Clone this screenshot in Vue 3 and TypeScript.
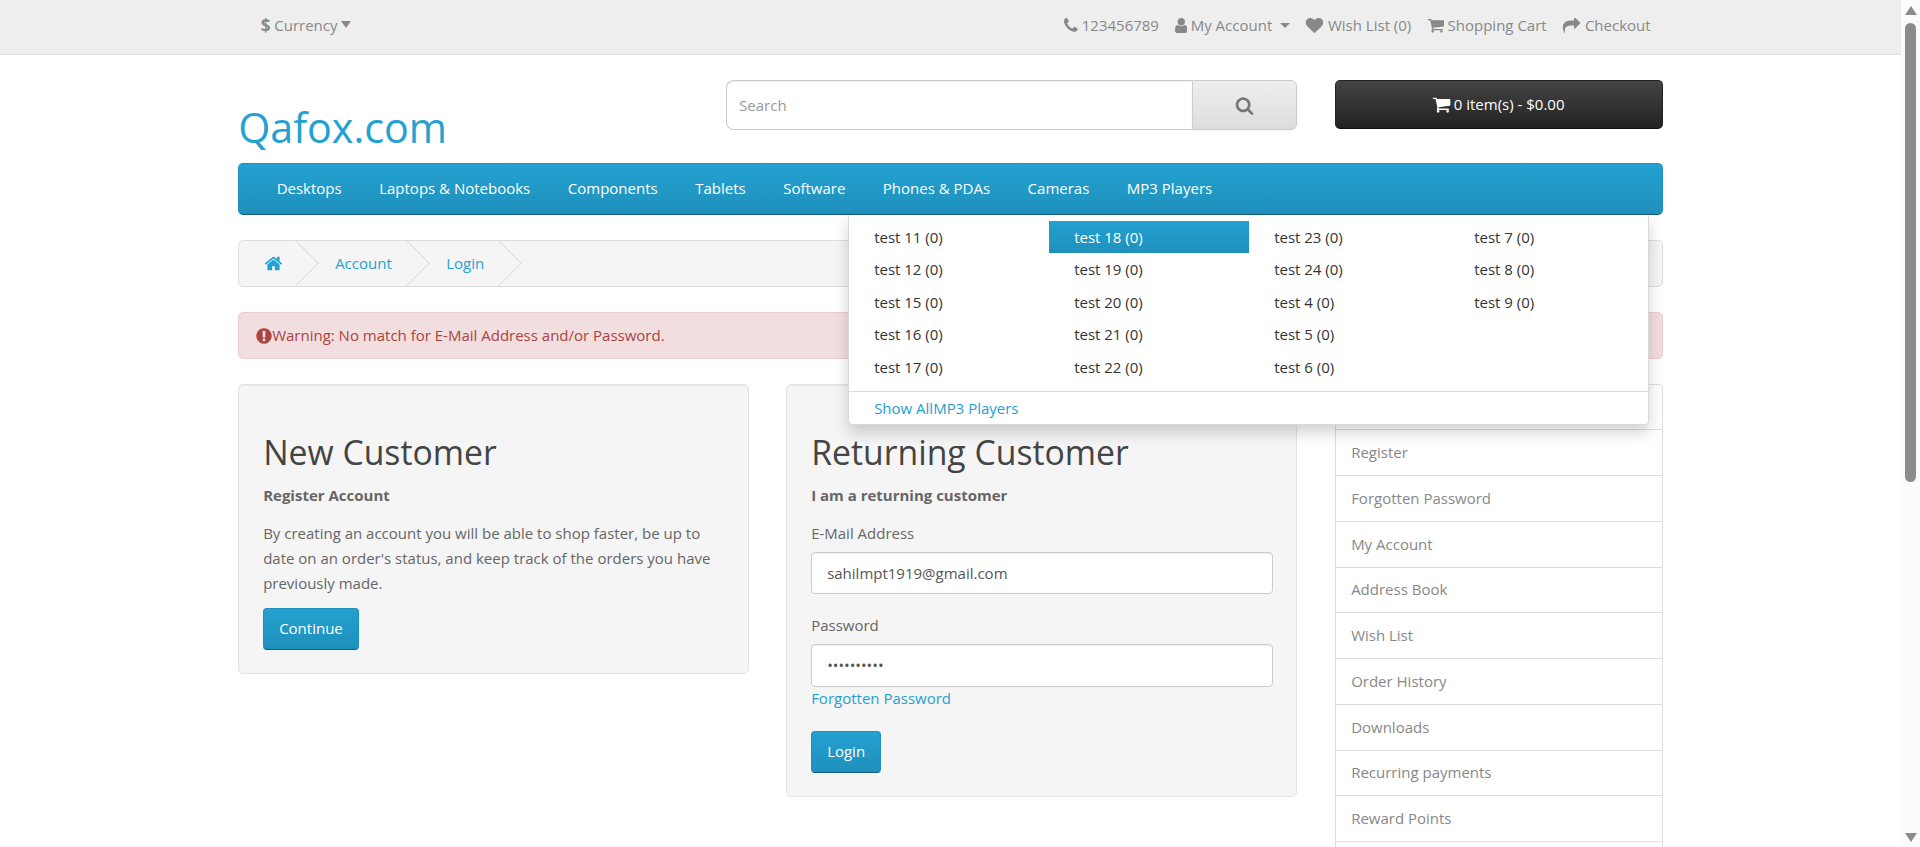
<script setup lang="ts">
const icons: Record<string, string> = {
  phone: 'M1600 1240q0 27-10 70.5t-21 68.5q-21 50-122 106-94 51-186 51-27 0-53-3.5t-57.5-12.5-47-14.5-55.5-20.5-49-18q-98-35-175-83-127-79-264-216t-216-264q-48-77-83-175-3-9-18-49t-20.5-55.5-14.5-47-12.5-57.5-3.5-53q0-92 51-186 56-101 106-122 25-11 68.5-21t70.5-10q14 0 21 3 18 6 53 76 11 19 30 54t35 63.5 31 53.5q3 4 17.5 25t21.5 35.5 7 28.5q0 20-28.5 50t-62 55-62 53-28.5 46q0 9 5 22.5t8.5 20.5 14 24 11.5 19q76 137 174 235t235 174q2 1 19 11.5t24 14 20.5 8.5 22.5 5q18 0 46-28.5t53-62 55-62 50-28.5q14 0 28.5 7t35.5 21.5 25 17.5q25 15 53.5 31t63.5 35 54 30q70 35 76 53 3 7 3 21z',
  user: 'M1536 1399q0 109-62.5 187t-150.5 78h-854q-88 0-150.5-78t-62.5-187q0-85 8.5-160.5t31.5-152 58.5-131 94-89 134.5-34.5q131 128 313 128t313-128q76 0 134.5 34.5t94 89 58.5 131 31.5 152 8.5 160.5zm-256-887q0 159-112.5 271.5t-271.5 112.5-271.5-112.5-112.5-271.5 112.5-271.5 271.5-112.5 271.5 112.5 112.5 271.5z',
  heart: 'M896 1664q-26 0-44-18l-624-602q-10-8-27.500-26t-55.500-65.500-68-97.500-53.500-121-23.500-138q0-220 127-344t351-124q62 0 126.500 21.500t120 58 95.500 68.500 76 68q36-36 76-68t95.500-68.500 120-58 126.500-21.500q224 0 351 124t127 344q0 221-229 450l-623 600q-18 18-44 18z',
  cart: 'M704 1536q0 52-38 90t-90 38-90-38-38-90 38-90 90-38 90 38 38 90zm896 0q0 52-38 90t-90 38-90-38-38-90 38-90 90-38 90 38 38 90zm128-1088v512q0 24-16.500 42.500t-40.500 21.500l-1044 122q13 60 13 70 0 16-24 64h920q26 0 45 19t19 45-19 45-45 19h-1024q-26 0-45-19t-19-45q0-11 8-31.500t16-36 21.500-40 15.500-29.500l-177-823h-204q-26 0-45-19t-19-45 19-45 45-19h256q16 0 28.500 6.500t19.500 15.500 13 24.500 8 26 5.500 29.500 4.500 26h1201q26 0 45 19t19 45z',
  share: 'M1792 640q0 26-19 45l-512 512q-19 19-45 19t-45-19-19-45v-256h-224q-98 0-175.500 6t-154 21.500-133 42.500-105.500 69.500-80 101-48.500 138.500-17.500 181q0 55 5 123 0 6 2.500 23.500t2.500 26.500q0 15-8.500 25t-23.500 10q-16 0-28-17-7-9-13-22t-13.500-30-10.500-24q-127-285-127-451 0-199 53-333 162-403 875-403h224v-256q0-26 19-45t45-19 45 19l512 512q19 19 19 45z',
  search: 'M1216 832q0-185-131.500-316.500t-316.500-131.500-316.500 131.500-131.500 316.500 131.500 316.500 316.500 131.500 316.500-131.500 131.500-316.500zm512 832q0 52-38 90t-90 38q-54 0-90-38l-343-342q-179 124-399 124-143 0-273.500-55.500t-225-150-150-225-55.500-273.500 55.500-273.500 150-225 225-150 273.500-55.500 273.500 55.500 225 150 150 225 55.500 273.500q0 220-124 399l343 343q37 37 37 90z',
  home: 'M1472 992v480q0 26-19 45t-45 19h-384v-384h-256v384h-384q-26 0-45-19t-19-45v-480q0-1 .5-3t.5-3l575-474 575 474q1 2 1 6zm223-69l-62 74q-8 9-21 11h-3q-13 0-21-7l-692-577-692 577q-12 8-24 7-13-2-21-11l-62-74q-8-10-7-23.500t11-21.500l719-599q32-26 76-26t76 26l244 204v-195q0-14 9-23t23-9h192q14 0 23 9t9 23v408l219 182q10 8 11 21.500t-7 23.500z',
  alert: 'M896 128q209 0 385.500 103t279.500 279.500 103 385.500-103 385.500-279.500 279.500-385.500 103-385.500-103-279.500-279.500-103-385.500 103-385.500 279.500-279.500 385.500-103zm128 1247v-190q0-14-9-23.500t-22-9.500h-192q-13 0-23 10t-10 23v190q0 13 10 23t23 10h192q13 0 22-9.500t9-23.500zm-2-344l18-621q0-12-10-18-10-8-24-8h-220q-14 0-24 8-10 6-10 18l17 621q0 10 10 17.500t24 7.500h185q14 0 23.500-7.500t10.500-17.500z',
}

// box crops each glyph to its own extent, width is the glyph's drawn width
const topLinks = [
  { icon: 'phone', box: '128 128 1472 1536', width: 15, label: '123456789' },
  { icon: 'user', box: '256 128 1280 1536', width: 12.5, label: 'My Account', caret: true },
  { icon: 'heart', box: '0 128 1792 1536', width: 19, label: 'Wish List (0)' },
  { icon: 'cart', box: '0 192 1728 1472', width: 17, label: 'Shopping Cart' },
  { icon: 'share', box: '0 128 1792 1536', width: 19, label: 'Checkout' },
]

const menuItems = ['Desktops', 'Laptops & Notebooks', 'Components', 'Tablets', 'Software', 'Phones & PDAs', 'Cameras', 'MP3 Players']

const dropdownColumns = [
  [11, 12, 15, 16, 17],
  [18, 19, 20, 21, 22],
  [23, 24, 4, 5, 6],
  [7, 8, 9],
]

const sideLinks = ['Login', 'Register', 'Forgotten Password', 'My Account', 'Address Book', 'Wish List', 'Order History', 'Downloads', 'Recurring payments', 'Reward Points']
</script>

<template>
  <div class="window">
    <div class="page">
      <nav class="top">
        <div class="container top-row">
          <a class="currency"><b>$</b> Currency<i class="caret big" /></a>
          <ul class="top-links">
            <li v-for="link in topLinks" :key="link.label">
              <svg class="icon" :viewBox="link.box" :style="{ width: link.width + 'px' }"><path :d="icons[link.icon]" /></svg>
              <span>{{ link.label }}</span>
              <i v-if="link.caret" class="caret" />
            </li>
          </ul>
        </div>
      </nav>

      <header class="container head">
        <div class="logo">Qafox.com</div>
        <div class="search">
          <input type="text" placeholder="Search" />
          <button type="button">
            <svg viewBox="0 0 1792 1792"><path :d="icons.search" /></svg>
          </button>
        </div>
        <button class="cart" type="button">
          <svg viewBox="0 0 1792 1792"><path :d="icons.cart" /></svg>
          <span>0 item(s) - $0.00</span>
        </button>
      </header>

      <div class="container">
        <nav class="menu">
          <a v-for="item in menuItems" :key="item">{{ item }}</a>
          <div class="dropdown">
            <div class="dropdown-grid">
              <ul v-for="(col, i) in dropdownColumns" :key="i">
                <li v-for="n in col" :key="n" :class="{ active: n === 18 }">test {{ n }} (0)</li>
              </ul>
            </div>
            <a class="see-all">Show AllMP3 Players</a>
          </div>
        </nav>

        <ul class="breadcrumb">
          <li><svg viewBox="0 0 1792 1792"><path :d="icons.home" /></svg></li>
          <li><a>Account</a></li>
          <li><a>Login</a></li>
        </ul>

        <div class="alert">
          <svg viewBox="0 0 1792 1792"><path :d="icons.alert" /></svg>
          <span>Warning: No match for E-Mail Address and/or Password.</span>
        </div>

        <div class="content-row">
          <main class="cards">
            <section class="well">
              <h2>New Customer</h2>
              <p class="lead"><strong>Register Account</strong></p>
              <p class="copy">By creating an account you will be able to shop faster, be up to date on an order's status, and keep track of the orders you have previously made.</p>
              <button class="btn" type="button">Continue</button>
            </section>
            <section class="well">
              <h2>Returning Customer</h2>
              <p class="lead"><strong>I am a returning customer</strong></p>
              <label class="field-label">E-Mail Address</label>
              <input class="field" type="text" value="sahilmpt1919@gmail.com" />
              <label class="field-label second">Password</label>
              <input class="field" type="password" value="1234567890" />
              <a class="forgot">Forgotten Password</a>
              <button class="btn" type="button">Login</button>
            </section>
          </main>
          <aside class="side">
            <a v-for="link in sideLinks" :key="link">{{ link }}</a>
          </aside>
        </div>
      </div>
    </div>

    <div class="scrollbar">
      <i class="arrow up" />
      <i class="thumb" />
      <i class="arrow down" />
    </div>
  </div>
</template>

<style>
html,
body {
  margin: 0;
  overflow: hidden;
}

*,
*::before,
*::after {
  box-sizing: border-box;
}
</style>

<style scoped>
.window {
  display: flex;
  height: 847px;
  overflow: hidden;
  font-family: 'Open Sans', sans-serif;
  font-size: 15px;
  line-height: 25px;
  color: #666;
  background: #fff;
}

.page {
  flex: 1;
  min-width: 0;
  overflow: hidden;
}

.container {
  width: 1425px;
  margin: 0 auto;
}

ul {
  margin: 0;
  padding: 0;
  list-style: none;
}

/* top bar */
.top {
  height: 55px;
  background: #eee;
  border-bottom: 1px solid #e2e2e2;
}

.top-row {
  display: flex;
  justify-content: space-between;
  align-items: center;
  height: 50px;
  padding: 0 12.5px 0 22.5px;
  color: #888;
}

.currency {
  display: flex;
  align-items: center;
  white-space: pre;
}

.currency b {
  font-size: 17px;
}

.caret {
  display: inline-block;
  margin-left: 4px;
  border-top: 5px solid #888;
  border-left: 5px solid transparent;
  border-right: 5px solid transparent;
}

.caret.big {
  margin-left: 3px;
  margin-top: -1px;
  border-top-width: 7px;
}

.top-links {
  display: flex;
  gap: 15.75px;
}

.top-links li {
  display: flex;
  align-items: center;
  gap: 3.5px;
}

.icon {
  height: 15px;
  fill: #888;
}

/* header */
.head {
  display: flex;
  gap: 37.5px;
  height: 108px;
  padding-top: 25px;
}

.logo {
  width: 450px;
  margin-top: 20px;
  font-size: 41.25px;
  line-height: 54px;
  color: #23a1d1;
}

.search {
  display: flex;
  width: 571.5px;
  height: 50px;
}

.search input {
  flex: 1;
  min-width: 0;
  padding: 0 12.5px;
  font: inherit;
  color: #555;
  border: 1px solid #ccc;
  border-right: 0;
  border-radius: 7.5px 0 0 7.5px;
  box-shadow: inset 0 1px 1px rgba(0, 0, 0, 0.075);
  outline: none;
}

.search input::placeholder {
  color: #999;
}

.search button {
  display: flex;
  align-items: center;
  justify-content: center;
  width: 105px;
  padding: 0;
  background: linear-gradient(to bottom, #eee, #ddd);
  border: 1px solid #ccc;
  border-radius: 0 6px 6px 0;
  box-shadow: 0 1px 2px rgba(0, 0, 0, 0.05);
}

.search svg {
  width: 19px;
  height: 19px;
  fill: #777;
}

.cart {
  display: flex;
  align-items: center;
  justify-content: center;
  gap: 3px;
  width: 328px;
  height: 49px;
  margin-left: auto;
  padding: 0 2px 0 0;
  font: inherit;
  color: #fff;
  background: linear-gradient(to bottom, #444, #222);
  border: 1px solid #222;
  border-bottom-color: #111;
  border-radius: 5px;
}

.cart svg {
  width: 19px;
  height: 19px;
  fill: #fff;
}

/* main menu */
.menu {
  position: relative;
  display: flex;
  height: 52px;
  padding: 0 18.75px 2px;
  align-items: center;
  color: #fff;
  background: linear-gradient(to bottom, #23a1d1, #1f90bb);
  border: 1px solid #1f90bb;
  border-bottom-color: #145e7a;
  border-radius: 5px;
}

.menu > a {
  padding: 0 18.75px;
}

.dropdown {
  position: absolute;
  top: 50.5px;
  left: 609px;
  z-index: 10;
  width: 801px;
  height: 210px;
  color: #333;
  background: #fff;
  border: 1px solid rgba(0, 0, 0, 0.15);
  border-top: 0;
  border-radius: 0 0 5px 5px;
  box-shadow: 0 7.5px 15px rgba(0, 0, 0, 0.175);
}

.dropdown-grid {
  display: grid;
  grid-template-columns: repeat(4, 200px);
  height: 177px;
  padding-top: 6px;
  border-bottom: 1px solid #ddd;
}

.dropdown-grid li {
  height: 32.5px;
  padding: 0 25px;
  line-height: 32.5px;
}

.dropdown-grid li.active {
  color: #fff;
  background: linear-gradient(to bottom, #23a1d1, #1f90bb);
}

.see-all {
  display: block;
  padding: 0 25px;
  line-height: 32.5px;
  color: #23a1d1;
}

/* breadcrumb */
.breadcrumb {
  display: flex;
  height: 47px;
  margin-top: 25px;
  overflow: hidden;
  background: #f5f5f5;
  border: 1px solid #ddd;
  border-radius: 5px;
}

.breadcrumb li {
  position: relative;
  display: flex;
  align-items: center;
  padding: 0 37.5px 0 17px;
  color: #23a1d1;
}

.breadcrumb li:first-child {
  padding: 0 35px 0 25px;
}

.breadcrumb li::after {
  content: '';
  position: absolute;
  top: 50%;
  right: 7px;
  width: 32.5px;
  height: 32.5px;
  margin-top: -16.25px;
  border-right: 1px solid #ddd;
  border-bottom: 1px solid #ddd;
  transform: rotate(-45deg);
}

.breadcrumb svg {
  width: 19px;
  height: 19px;
  fill: #23a1d1;
}

/* alert */
.alert {
  display: flex;
  align-items: center;
  height: 47px;
  margin-top: 25px;
  padding: 0 15.5px;
  color: #a94442;
  background: #f2dede;
  border: 1px solid #ebccd1;
  border-radius: 5px;
}

.alert svg {
  width: 18px;
  height: 18px;
  margin-right: -0.5px;
  fill: #a94442;
}

/* content */
.content-row {
  display: flex;
  gap: 38.5px;
  margin-top: 25px;
}

.cards {
  display: flex;
  flex: 1;
  gap: 37.5px;
  align-items: flex-start;
}

.well {
  display: flex;
  flex: 1;
  flex-direction: column;
  align-items: flex-start;
  padding: 24px 23px 23px 24px;
  background: #f5f5f5;
  border: 1px solid #e3e3e3;
  border-radius: 5px;
  box-shadow: inset 0 1px 1px rgba(0, 0, 0, 0.05);
}

h2 {
  margin: 25px 0 0;
  font-size: 33.75px;
  font-weight: 400;
  line-height: 37px;
  color: #444;
}

.lead {
  margin: 12px 0 0;
}

.copy {
  margin: 12.5px 0 12px;
}

.btn {
  height: 42.5px;
  padding: 0 15px;
  font: inherit;
  color: #fff;
  background: linear-gradient(to bottom, #23a1d1, #1f90bb);
  border: 1px solid #1f90bb;
  border-bottom-color: #145e7a;
  border-radius: 4px;
}

.field-label {
  margin-top: 12.5px;
}

.field-label.second {
  margin-top: 19px;
}

.field {
  width: 100%;
  height: 42.5px;
  margin-top: 6px;
  padding: 0 15px;
  font: inherit;
  color: #555;
  background: #fff;
  border: 1px solid #ccc;
  border-radius: 4px;
  box-shadow: inset 0 1px 1px rgba(0, 0, 0, 0.075);
  outline: none;
}

.forgot {
  margin-top: -1px;
  color: #23a1d1;
}

.forgot + .btn {
  margin-top: 20px;
}

.side {
  display: flex;
  flex-direction: column;
  flex: none;
  width: 328px;
  min-height: 500px;
  border: 1px solid #ddd;
  border-bottom: 0;
  border-radius: 5px 5px 0 0;
}

.side a {
  display: flex;
  flex: none;
  align-items: center;
  height: 45.75px;
  padding: 0 15px;
  color: #888;
  border-bottom: 1px solid #ddd;
}

.side a:first-child {
  height: 45.25px;
}

/* scrollbar */
.scrollbar {
  display: flex;
  flex: none;
  flex-direction: column;
  align-items: center;
  width: 18.75px;
  padding: 6px 0 5px;
  background: #fbfbfb;
}

.thumb {
  width: 11px;
  height: 459px;
  margin-top: 8px;
  background: #8b8b8b;
  border-radius: 6px;
}

.arrow {
  border-left: 6px solid transparent;
  border-right: 6px solid transparent;
}

.arrow.up {
  border-bottom: 9px solid #8b8b8b;
}

.arrow.down {
  margin-top: auto;
  border-top: 9px solid #8b8b8b;
}
</style>
